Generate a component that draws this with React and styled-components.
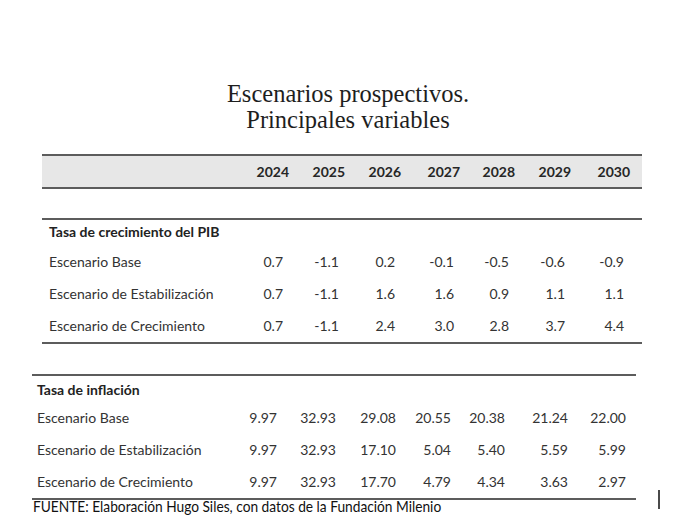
import React from "react";
import styled, { createGlobalStyle } from "styled-components";

const GlobalStyle = createGlobalStyle`
  html, body {
    margin: 0;
    padding: 0;
    background: #ffffff;
  }
  body {
    width: 696px;
    height: 516px;
    overflow: hidden;
  }
`;

const StPage = styled.div`
  width: 696px;
  height: 516px;
  display: flex;
  flex-direction: column;
  font-family: Lato, "Liberation Sans", sans-serif;
  color: #333333;
`;

const StTitle = styled.h1`
  margin: 81px 0 0 0;
  font-family: "Liberation Serif", "DejaVu Serif", serif;
  font-weight: normal;
  font-size: 24.5px;
  line-height: 26px;
  color: #1e1e1e;
  text-align: center;
`;

const StTable = styled.div`
  width: ${(p) => p.$width}px;
  margin-left: ${(p) => p.$left}px;
  display: grid;
  grid-template-columns: ${(p) => p.$columns};
`;

const StHeadBand = styled.div`
  grid-column: 1 / -1;
  display: grid;
  grid-template-columns: subgrid;
  margin-top: 21px;
  height: 31px;
  align-items: center;
  background: #e7e7e7;
  border-top: 2px solid #5c5c5c;
  border-bottom: 2px solid #5c5c5c;
`;

const StYear = styled.div`
  text-align: right;
  padding-right: 12px;
  font-weight: bold;
  font-size: 14px;
  color: #262626;
`;

const StSection = styled.div`
  grid-column: 1 / -1;
  display: grid;
  grid-template-columns: subgrid;
  margin-top: ${(p) => p.$gap}px;
  border-top: 2px solid #5c5c5c;
  border-bottom: 2px solid #5c5c5c;
`;

const StGroupTitle = styled.div`
  grid-column: 1 / -1;
  height: 26px;
  padding: ${(p) => p.$top}px 0 0 ${(p) => p.$indent}px;
  box-sizing: border-box;
  line-height: 18px;
  font-size: 14px;
  font-weight: bold;
  color: #222222;
`;

const StLabel = styled.div`
  height: 32px;
  line-height: 32px;
  padding-left: ${(p) => p.$indent}px;
  font-size: 14px;
  white-space: nowrap;
`;

const StValue = styled.div`
  height: 32px;
  line-height: 32px;
  text-align: right;
  padding-right: ${(p) => p.$pad}px;
  font-size: 14px;
`;

const StBottomWrap = styled.div`
  display: flex;
  align-items: flex-end;
`;

const StBottomColumn = styled.div`
  display: flex;
  flex-direction: column;
`;

const StSource = styled.div`
  margin: 0 0 0 33px;
  height: 13px;
  line-height: 13px;
  font-size: 15px;
  color: #111111;
  white-space: nowrap;
  transform: scaleX(0.915);
  transform-origin: left center;
`;

const StStrayBar = styled.div`
  width: 2px;
  height: 19px;
  margin: 0 0 4px 22px;
  background: #4a4a4a;
`;

const years = ["2024", "2025", "2026", "2027", "2028", "2029", "2030"];

const pib = [
  { label: "Escenario Base", values: ["0.7", "-1.1", "0.2", "-0.1", "-0.5", "-0.6", "-0.9"] },
  { label: "Escenario de Estabilización", values: ["0.7", "-1.1", "1.6", "1.6", "0.9", "1.1", "1.1"] },
  { label: "Escenario de Crecimiento", values: ["0.7", "-1.1", "2.4", "3.0", "2.8", "3.7", "4.4"] },
];

const inflacion = [
  { label: "Escenario Base", values: ["9.97", "32.93", "29.08", "20.55", "20.38", "21.24", "22.00"] },
  { label: "Escenario de Estabilización", values: ["9.97", "32.93", "17.10", "5.04", "5.40", "5.59", "5.99"] },
  { label: "Escenario de Crecimiento", values: ["9.97", "32.93", "17.70", "4.79", "4.34", "3.63", "2.97"] },
];

const topColumns = "1fr 58px 56px 56px 59px 55px 56px 59px";
const bottomColumns = "1fr 60px 59px 60px 55px 54px 63px 58px";

function Rows({ rows, indent, pad }) {
  return rows.map((row) => (
    <React.Fragment key={row.label}>
      <StLabel $indent={indent}>{row.label}</StLabel>
      {row.values.map((v, i) => (
        <StValue key={i} $pad={pad}>
          {v}
        </StValue>
      ))}
    </React.Fragment>
  ));
}

export default function App() {
  return (
    <>
      <GlobalStyle />
      <StPage>
        <StTitle>
          Escenarios prospectivos.
          <br />
          Principales variables
        </StTitle>

        <StTable $width={600} $left={42} $columns={topColumns}>
          <StHeadBand>
            <div></div>
            {years.map((y) => (
              <StYear key={y}>{y}</StYear>
            ))}
          </StHeadBand>
          <StSection $gap={29}>
            <StGroupTitle $indent={7} $top={3}>
              Tasa de crecimiento del PIB
            </StGroupTitle>
            <Rows rows={pib} indent={7} pad={18} />
          </StSection>
        </StTable>

        <StBottomWrap>
          <StBottomColumn>
            <StTable $width={604} $left={32} $columns={bottomColumns}>
              <StSection $gap={30}>
                <StGroupTitle $indent={5} $top={5}>
                  Tasa de inflación
                </StGroupTitle>
                <Rows rows={inflacion} indent={5} pad={10} />
              </StSection>
            </StTable>
            <StSource>
              FUENTE: Elaboración Hugo Siles, con datos de la Fundación Milenio
            </StSource>
          </StBottomColumn>
          <StStrayBar />
        </StBottomWrap>
      </StPage>
    </>
  );
}
